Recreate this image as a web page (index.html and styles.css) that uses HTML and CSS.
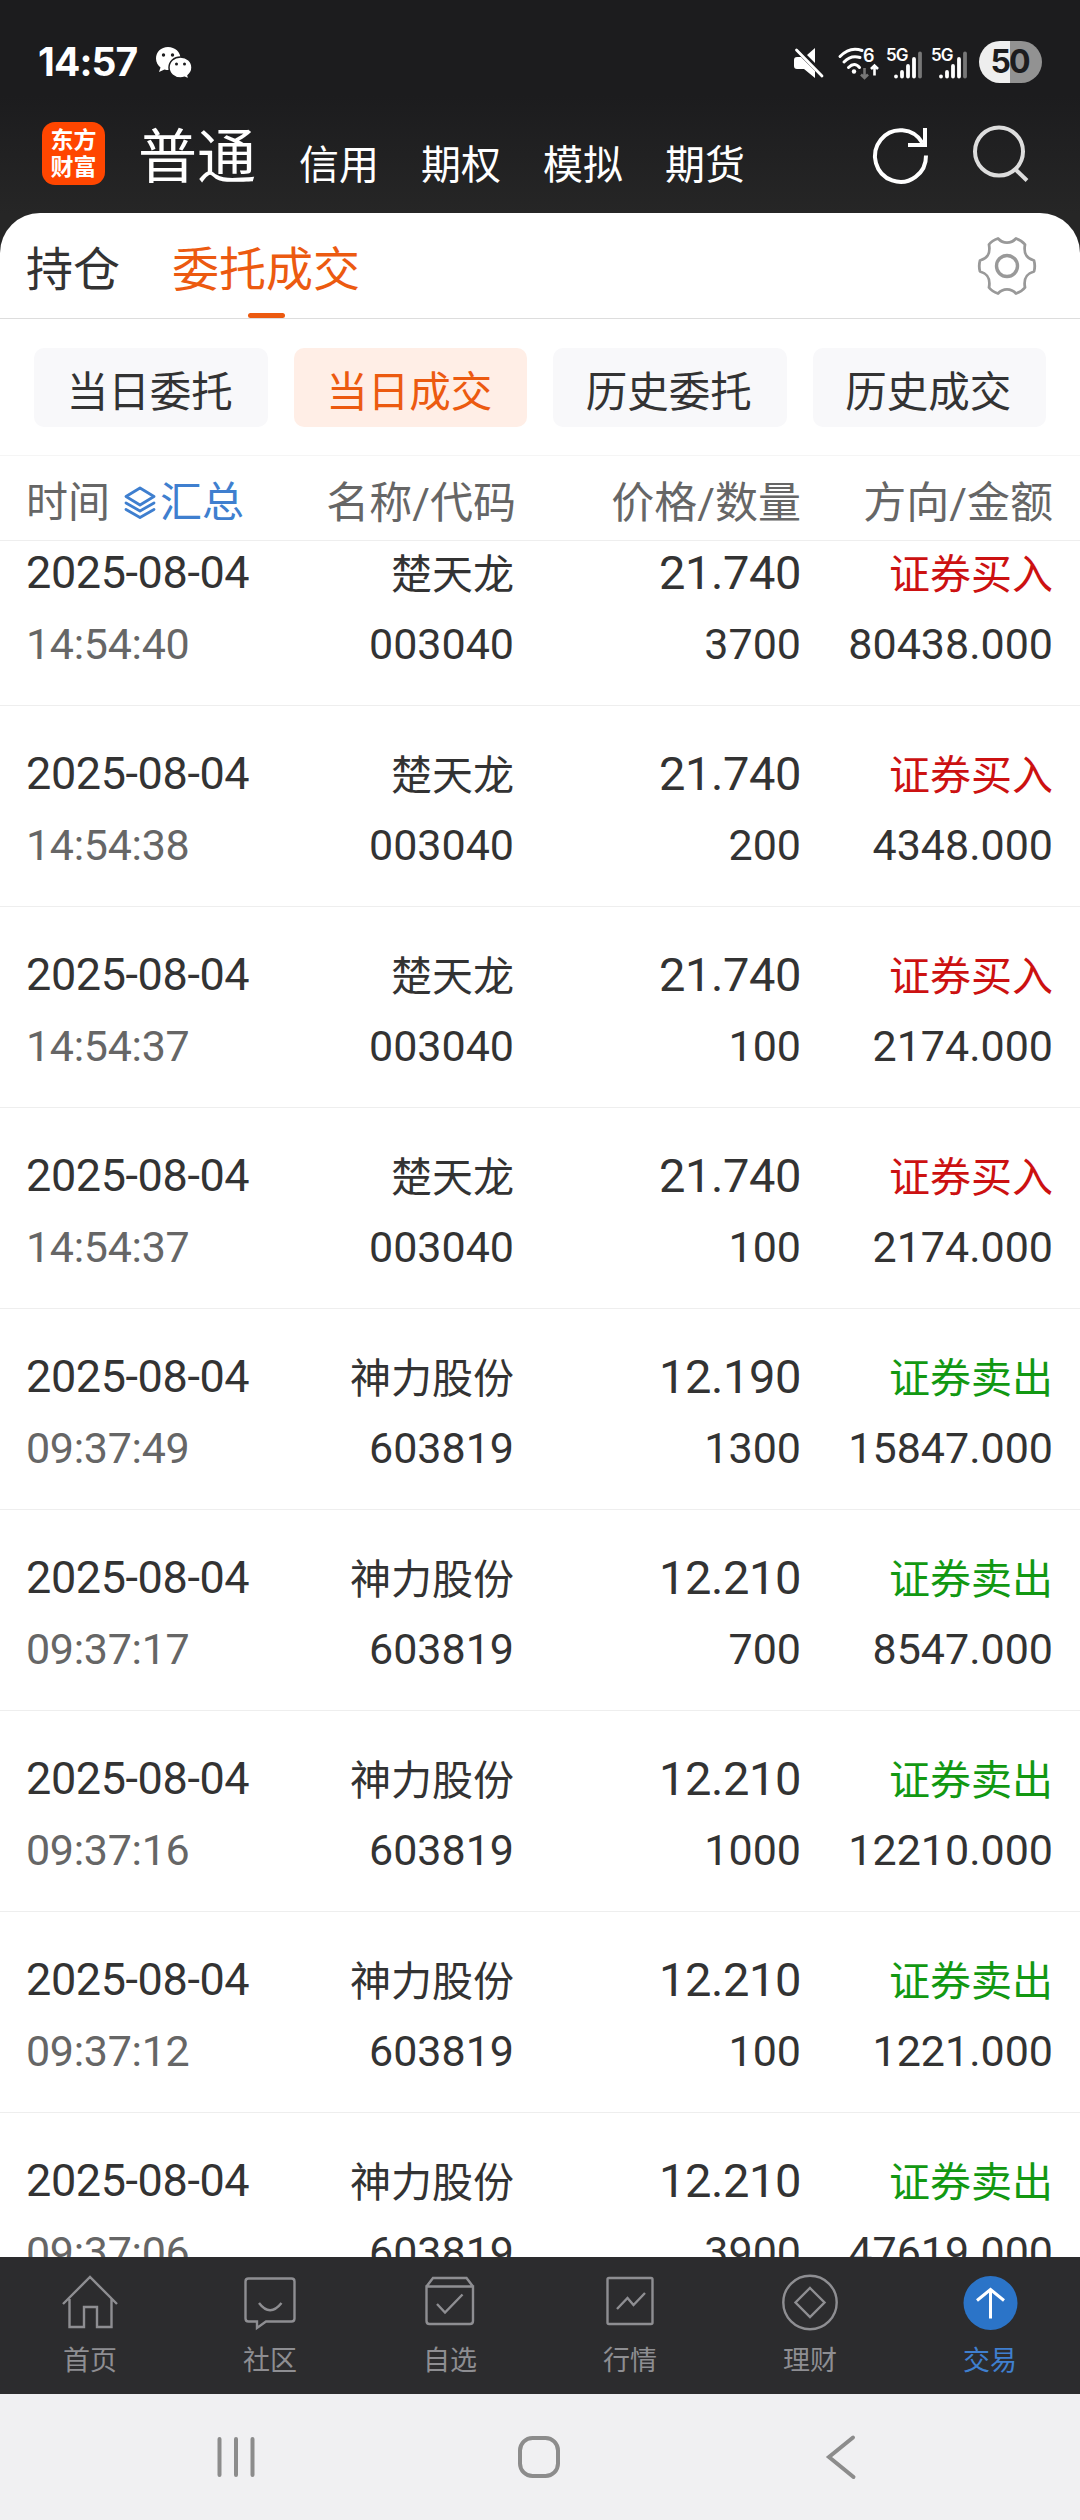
FILE: index.html
```html
<!DOCTYPE html>
<html lang="zh-CN">
<head>
    <meta charset="UTF-8">
    <meta name="viewport" content="width=device-width, initial-scale=1.0">
    <title>当日成交</title>
    <link rel="stylesheet" href="styles.css">
</head>
<body>
    <div class="header">
        <div class="status-bar">
            <span class="clock">14:57</span>
            <svg class="wechat" width="38" height="34" viewBox="0 0 38 34">
                <path fill="#fff" d="M13 1C6 1 1 6 1 12.500c0 4 2 7 4.500 9L4 26l5.500-2.500C11 24 12 24 13 24c7 0 12.500-5 12.500-11.500S20 1 13 1z"/>
                <path fill="#fff" stroke="#1c1c1e" stroke-width="1.500" d="M25.500 11C19 11 14 15.500 14 21.500S19 32 25.500 32c1.500 0 3-.3 4.200-.7l4.300 2-1-3.800c2.500-2 4-4.700 4-8C37 15.500 32 11 25.500 11z"/>
                <g fill="#1c1c1e"><circle cx="8.500" cy="9" r="1.700"/><circle cx="17.500" cy="9" r="1.700"/><circle cx="21.500" cy="18" r="1.500"/><circle cx="29.500" cy="18" r="1.500"/></g>
            </svg>
            <div class="status-icons">
                <svg class="mute" width="30" height="32" viewBox="0 0 30 32">
                    <path fill="#fff" d="M21 1v15L13 8zM0 13q0-3 3-3h4l14 14v7l-11-9H3q-3 0-3-3z"/>
                    <path stroke="#fff" stroke-width="2.800" stroke-linecap="round" d="M2.500 3 28 29"/>
                </svg>
                <svg class="wifi" width="42" height="34" viewBox="0 0 42 34">
                    <g fill="none" stroke="#fff" stroke-width="3" stroke-linecap="round">
                        <path d="M2 9.500Q12-1 24 3.500M6 15q7-7.500 16-4.500M10.500 20.500q6-6 11 0"/>
                    </g>
                    <circle cx="16" cy="24.500" r="2.200" fill="#fff"/>
                    <text x="25" y="15" class="six">6</text>
                    <path class="line dim" d="M26.500 21v9.500m-3.500-3 3.500 3.500 3.500-3.500"/>
                    <path class="line" d="M36.500 28.500V19m-3.500 3 3.500-3.500 3.500 3.500"/>
                </svg>
                <svg class="signal" width="37" height="34" viewBox="0 0 37 34">
                    <text x="0" y="13.500" class="net">5G</text>
                    <path class="bar" d="M10 29.300v.2M16 25v4.500M22 19v10.500M28 12v17.500"/>
                    <path class="bar dim" d="M34 6.500v23"/>
                </svg>
                <svg class="signal" width="37" height="34" viewBox="0 0 37 34">
                    <text x="0" y="13.500" class="net">5G</text>
                    <path class="bar" d="M10 29.300v.2M16 25v4.500M22 19v10.500M28 12v17.500"/>
                    <path class="bar dim" d="M34 6.500v23"/>
                </svg>
                <span class="battery">50</span>
            </div>
        </div>
        <div class="account-bar">
            <div class="logo">东方<br>财富</div>
            <span class="account active">普通</span>
            <span class="account">信用</span>
            <span class="account">期权</span>
            <span class="account">模拟</span>
            <span class="account">期货</span>
            <svg class="refresh" width="56" height="58" viewBox="0 0 56 58" fill="none" stroke="#fff" stroke-width="4">
                <path d="M53 29.500A25.500 25.800 0 1 1 49.500 17"/>
                <path d="M52 2v17H35"/>
            </svg>
            <svg class="search" width="56" height="58" viewBox="0 0 56 58" fill="none" stroke="#ddd" stroke-width="4">
                <circle cx="26" cy="26.500" r="24"/>
                <path d="m42 44 12 11.500"/>
            </svg>
        </div>
    </div>

    <div class="panel">
        <div class="tabs">
            <span class="tab">持仓</span>
            <span class="tab active">委托成交</span>
            <svg class="gear" width="58" height="58" viewBox="0 0 58 58" fill="none" stroke="#999" stroke-width="2.800" stroke-linejoin="round">
                <path d="M20 1.500Q14 3.500 11 7.500C12.500 16 10.500 21 2 23.500Q.5 29 2 34.500C10.500 37 12.500 42 11 50.500Q14 54.500 20 56.500C25 51 33 51 38 56.500Q44 54.500 47 50.500C45.500 42 47.500 37 56 34.500Q57.500 29 56 23.500C47.500 21 45.500 16 47 7.500Q44 3.500 38 1.500C33 7 25 7 20 1.500z"/>
                <circle cx="29" cy="29" r="10.500" stroke-width="3.400"/>
            </svg>
        </div>

        <div class="filters">
            <span class="filter">当日委托</span>
            <span class="filter active">当日成交</span>
            <span class="filter">历史委托</span>
            <span class="filter">历史成交</span>
        </div>

        <div class="columns">
            <div class="first">时间
                <svg width="32" height="34" viewBox="0 0 32 34" fill="none" stroke="#3f7fcf" stroke-width="2.800" stroke-linejoin="round" stroke-linecap="round">
                    <path d="m16 2 14 8.500L16 19 2 10.500zM2 17l14 8 14-8M2 23.500l14 8 14-8"/>
                </svg><span class="summary">汇总</span>
            </div>
            <div>名称/代码</div>
            <div>价格/数量</div>
            <div>方向/金额</div>
        </div>

        <div class="list" id="dealList"></div>
    </div>

    <div class="tabbar">
        <div class="item">
            <svg width="60" height="60" viewBox="0 0 60 60">
                <path d="M3 31 30 4l27 27M9.500 26v28H24V34h13v20h14.500V26"/>
            </svg>
            首页
        </div>
        <div class="item">
            <svg width="60" height="60" viewBox="0 0 60 60">
                <path d="M8.500 5.500h43q3 0 3 3v37q0 3-3 3H26L17 55v-6.500H8.500q-3 0-3-3v-37q0-3 3-3zM19 30q11 14.500 22.500 0"/>
            </svg>
            社区
        </div>
        <div class="item">
            <svg width="60" height="60" viewBox="0 0 60 60">
                <path d="M6.500 13.500h46.500V48q0 3-3 3H9.500q-3 0-3-3zL13 5h33.500l6.500 8.500M17 31l8 8.500 17.500-18"/>
            </svg>
            自选
        </div>
        <div class="item">
            <svg width="60" height="60" viewBox="0 0 60 60">
                <path d="M9 5h42q1.500 0 1.500 1.500v43q0 1.500-1.500 1.500H9q-1.500 0-1.500-1.500v-43Q7.500 5 9 5zM17 36l10.500-11 6 7 11.500-12"/>
            </svg>
            行情
        </div>
        <div class="item">
            <svg width="60" height="60" viewBox="0 0 60 60">
                <circle cx="30" cy="29.500" r="26.700"/>
                <path d="m30 15 14.500 14.500L30 44 15.500 29.500z"/>
            </svg>
            理财
        </div>
        <div class="item active">
            <svg width="60" height="60" viewBox="0 0 60 60">
                <circle class="disc" cx="30.500" cy="30" r="27"/>
                <path d="M30.500 45.500V16.500M17 27.500l13.500-11 13.500 11"/>
            </svg>
            交易
        </div>
    </div>

    <div class="nav">
        <svg width="40" height="44" viewBox="0 0 40 44"><path d="M3.500 4v36M20 4v36M36.500 4v36"/></svg>
        <svg width="44" height="44" viewBox="0 0 44 44"><rect x="3" y="3" width="38" height="38" rx="12.500"/></svg>
        <svg width="40" height="44" viewBox="0 0 40 44"><path d="M32 2.500 8 22l24.500 20"/></svg>
    </div>

    <script>
        const deals = [
            ["14:54:40", "楚天龙", "003040", "21.740", "3700", "80438.000", "buy"],
            ["14:54:38", "楚天龙", "003040", "21.740", "200", "4348.000", "buy"],
            ["14:54:37", "楚天龙", "003040", "21.740", "100", "2174.000", "buy"],
            ["14:54:37", "楚天龙", "003040", "21.740", "100", "2174.000", "buy"],
            ["09:37:49", "神力股份", "603819", "12.190", "1300", "15847.000", "sell"],
            ["09:37:17", "神力股份", "603819", "12.210", "700", "8547.000", "sell"],
            ["09:37:16", "神力股份", "603819", "12.210", "1000", "12210.000", "sell"],
            ["09:37:12", "神力股份", "603819", "12.210", "100", "1221.000", "sell"],
            ["09:37:06", "神力股份", "603819", "12.210", "3900", "47619.000", "sell"]
        ];

        document.getElementById("dealList").innerHTML = deals.map(([time, name, code, price, count, amount, side]) => `
            <div class="deal">
                <span class="date">2025-08-04</span>
                <span class="name">${name}</span>
                <span class="price">${price}</span>
                <span class="name ${side}">${side === "buy" ? "证券买入" : "证券卖出"}</span>
                <span class="time">${time}</span>
                <span>${code}</span>
                <span>${count}</span>
                <span>${amount}</span>
            </div>`).join("");
    </script>
</body>
</html>
```
FILE: styles.css
```css
* {
    box-sizing: border-box;
}
body {
    margin: 0;
    width: 1080px;
    height: 2520px;
    overflow: hidden;
    display: flex;
    flex-direction: column;
    background: #262626;
    color: #333;
    font-family: Roboto, "Noto Sans CJK SC", sans-serif;
}
svg {
    display: block;
    flex: none;
    overflow: visible;
}

/* top */
.header {
    height: 213px;
    flex: none;
    background: linear-gradient(#1c1c1e 45%, #262626);
    color: #fff;
}
.status-bar {
    height: 122px;
    padding: 0 38px;
    display: flex;
    align-items: flex-start;
}
.clock {
    margin-top: 42px;
    font: bold 39px/40px Inter, sans-serif;
    letter-spacing: -0.9px;
    width: 117px;
}
.wechat {
    margin-top: 46px;
}
.status-icons {
    margin-left: auto;
    display: flex;
}
.mute {
    margin: 47px 14px 0 0;
}
.wifi {
    margin: 47px 6px 0 0;
}
.signal {
    margin: 47px 8px 0 0;
}
.signal + .battery {
    margin-left: 3px;
}
.six, .net {
    fill: #fff;
    font-family: Inter, sans-serif;
    font-weight: 600;
}
.six {
    font-size: 18px;
}
.net {
    font-size: 17px;
    letter-spacing: -1px;
}
.line {
    fill: none;
    stroke: #fff;
    stroke-width: 2.6;
}
.bar {
    stroke: #fff;
    stroke-width: 3.8;
    stroke-linecap: round;
}
.dim {
    stroke: #777;
}
.battery {
    margin-top: 41px;
    width: 63px;
    height: 42px;
    padding-right: 2px;
    border-radius: 21px;
    background: linear-gradient(90deg, #eee 50%, #929292 50%);
    color: #1c1c1e;
    font: bold 32px/42px Inter, sans-serif;
    letter-spacing: -2px;
    text-align: center;
}
.account-bar {
    height: 91px;
    padding-left: 42px;
    display: flex;
    align-items: flex-start;
}
.logo {
    width: 63px;
    height: 63px;
    margin-right: 33px;
    padding-top: 5px;
    border-radius: 13px;
    background: #ff4600;
    font-size: 23px;
    font-weight: bold;
    line-height: 27px;
    text-align: center;
}
.account {
    margin: 16px 42px 0 0;
    font-size: 40px;
    line-height: 56px;
}
.account.active {
    margin: 8px 43px 0 0;
    font-size: 59px;
}
.refresh {
    margin: 4px 44px 0 86px;
}
.search {
    margin-top: 3px;
}

/* white panel */
.panel {
    height: 2044px;
    flex: none;
    overflow: hidden;
    background: #fff;
    border-radius: 40px 40px 0 0;
}
.tabs {
    height: 106px;
    padding: 0 44px 0 26px;
    display: flex;
    align-items: flex-start;
    border-bottom: 1px solid #ddd;
}
.tab {
    position: relative;
    height: 105px;
    margin-right: 52px;
    font-size: 47px;
    line-height: 114px;
}
.tab.active {
    color: #ec5a10;
}
.tab.active::after {
    content: "";
    position: absolute;
    left: 50%;
    bottom: 0;
    width: 37px;
    height: 5px;
    margin-left: -18px;
    border-radius: 3px;
    background: #ec5a10;
}
.gear {
    margin: 24px 0 0 auto;
}
.filters {
    height: 137px;
    padding: 29px 34px 0;
    display: flex;
    gap: 26px;
    border-bottom: 1px solid #f5f5f5;
}
.filter {
    flex: 1;
    height: 79px;
    padding-right: 2px;
    border-radius: 10px;
    background: #f8f8fa;
    font-size: 41.5px;
    line-height: 89px;
    text-align: center;
}
.filter.active {
    background: #ffeee6;
    color: #ec5a10;
}
.columns, .deal {
    display: grid;
    grid-template-columns: 245px 243px 287px 252px;
    padding-left: 26px;
    text-align: right;
}
.columns {
    height: 85px;
    padding-top: 2px;
    border-bottom: 1px solid #eee;
    color: #666;
    font-size: 43px;
    line-height: 90px;
}
.columns div:nth-child(2) {
    margin-right: -2px;
}
.columns .first {
    display: flex;
    align-items: flex-start;
    font-size: 42px;
}
.columns svg {
    margin: 28px 4px 0 14px;
}
.summary {
    color: #3f7fcf;
}

/* the list is scrolled a bit, first row slides under the header */
.list {
    margin-top: -36px;
}
.deal {
    height: 201px;
    padding-top: 33px;
    grid-template-rows: 71px 71px;
    border-bottom: 1px solid #eee;
    font-size: 43px;
    line-height: 71px;
}
.date {
    font-size: 45px;
    letter-spacing: -0.4px;
    line-height: 69px;
    text-align: left;
}
.time {
    color: #666;
    letter-spacing: -0.3px;
    text-align: left;
}
.name {
    font-size: 41px;
    line-height: 75px;
}
.price {
    font-size: 47px;
    letter-spacing: -0.4px;
    line-height: 70px;
}
.buy {
    color: #cc1111;
}
.sell {
    color: #129812;
}

/* bottom */
.tabbar {
    height: 137px;
    flex: none;
    display: flex;
    background: #2c2c2e;
}
.item {
    flex: 1;
    padding-top: 16px;
    display: flex;
    flex-direction: column;
    align-items: center;
    color: #8e8e92;
    font-size: 27px;
    line-height: 57px;
}
.item svg {
    fill: none;
    stroke: #8e8e92;
    stroke-width: 2.4;
}
.item.active {
    color: #3f7fcf;
}
.item.active svg {
    stroke: #fff;
    stroke-width: 3;
}
.item .disc {
    fill: #2b74c8;
    stroke: none;
}
.nav {
    height: 126px;
    flex: none;
    display: flex;
    align-items: center;
    justify-content: space-between;
    padding: 0 219px 0 216px;
    background: #f0f0f2;
}
.nav svg {
    fill: none;
    stroke: #8c8c8c;
    stroke-width: 4;
    stroke-linecap: round;
}
```
